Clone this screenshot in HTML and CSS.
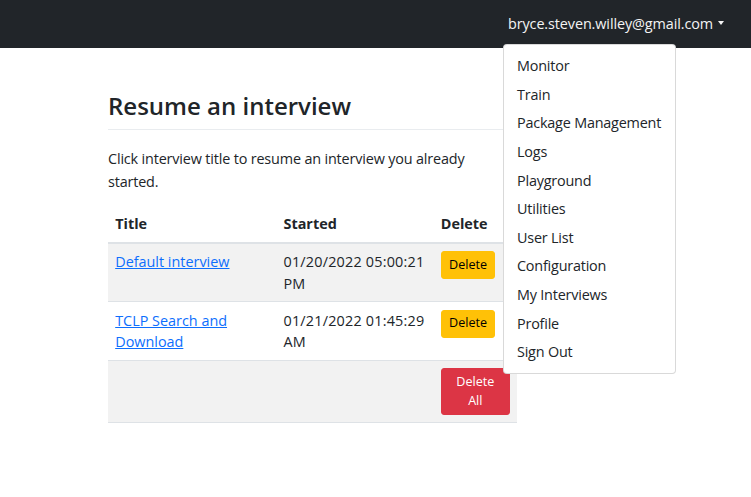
FILE: index.html
```html
<!DOCTYPE html>
<html>
<head>
<meta charset="utf-8">
<link rel="stylesheet" href="styles.css">
</head>
<body>
<nav class="navbar">
  <div class="user-menu">
    <a class="user-toggle" href="#">bryce.steven.willey@gmail.com<span class="caret"></span></a>
    <div class="dropdown-menu">
      <a class="dropdown-item" href="#">Monitor</a>
      <a class="dropdown-item" href="#">Train</a>
      <a class="dropdown-item" href="#">Package Management</a>
      <a class="dropdown-item" href="#">Logs</a>
      <a class="dropdown-item" href="#">Playground</a>
      <a class="dropdown-item" href="#">Utilities</a>
      <a class="dropdown-item" href="#">User List</a>
      <a class="dropdown-item" href="#">Configuration</a>
      <a class="dropdown-item" href="#">My Interviews</a>
      <a class="dropdown-item" href="#">Profile</a>
      <a class="dropdown-item" href="#">Sign Out</a>
    </div>
  </div>
</nav>
<main class="content">
  <h1 class="page-title">Resume an interview</h1>
  <p class="intro">Click interview title to resume an interview you already started.</p>
  <table class="sessions">
    <thead>
      <tr><th class="c-title">Title</th><th class="c-start">Started</th><th class="c-del">Delete</th></tr>
    </thead>
    <tbody>
      <tr class="striped">
        <td><a class="link" href="#">Default interview</a></td>
        <td><span class="ts">01/20/2022 05:00:21 PM</span></td>
        <td><button class="btn btn-warning">Delete</button></td>
      </tr>
      <tr>
        <td><a class="link" href="#">TCLP Search and Download</a></td>
        <td><span class="ts">01/21/2022 01:45:29 AM</span></td>
        <td><button class="btn btn-warning">Delete</button></td>
      </tr>
      <tr class="striped">
        <td></td>
        <td></td>
        <td><button class="btn btn-danger">Delete All</button></td>
      </tr>
    </tbody>
  </table>
</main>
</body>
</html>
```
FILE: styles.css
```css
html, body {
  margin: 0;
  padding: 0;
  background: #fff;
}
body {
  font-family: "Open Sans", "Noto Sans", sans-serif;
  font-size: 14.4px;
  line-height: 1.5;
  color: #212529;
}
.navbar {
  height: 48px;
  background: #212529;
  display: flex;
  justify-content: flex-end;
  align-items: center;
  padding-right: 27px;
}
.user-menu {
  position: relative;
}
.user-toggle {
  color: #f4f4f4;
  text-decoration: none;
  display: flex;
  align-items: center;
  letter-spacing: -0.1px;
}
.caret {
  display: inline-block;
  margin-left: 5px;
  border-top: 4.5px solid #f4f4f4;
  border-left: 3.5px solid transparent;
  border-right: 3.5px solid transparent;
  margin-top: -2px;
}
.dropdown-menu {
  position: absolute;
  top: 31px;
  left: -5px;
  width: 171px;
  background: #fff;
  border: 1px solid rgba(0,0,0,.15);
  border-radius: 4px;
  padding: 6.5px 0;
  display: flex;
  flex-direction: column;
  z-index: 10;
}
.dropdown-item {
  display: block;
  padding: 3.5px 13px;
  line-height: 21.6px;
  color: #212529;
  text-decoration: none;
  white-space: nowrap;
  letter-spacing: -0.2px;
}
.content {
  width: 409px;
  padding: 40px 0 0 108px;
}
.page-title {
  font-size: 24px;
  font-weight: 600;
  line-height: 1.2;
  margin: 0;
  padding: 4px 0 8px;
  border-bottom: 1px solid #e9ecef;
  width: 420px;
}
.intro {
  margin: 17px 0 13px;
  line-height: 23px;
  letter-spacing: -0.16px;
}
.sessions {
  width: 409px;
  border-collapse: collapse;
}
.sessions th {
  text-align: left;
  font-weight: 700;
  padding: 7.2px;
  border-bottom: 2px solid #dee2e6;
  vertical-align: bottom;
}
.c-title { width: 154px; }
.c-start { width: 143px; }
.sessions td {
  padding: 7.2px;
  vertical-align: top;
  border-bottom: 1px solid #dee2e6;
}
.striped td {
  background: #f2f2f2;
}
.ts {
  letter-spacing: 0.2px;
}
.link {
  color: #0d6efd;
  text-decoration: underline;
}
.btn {
  font-family: inherit;
  font-size: 12.6px;
  line-height: 1.5;
  padding: 3.6px 7.2px;
  border-radius: 3px;
  border: 1px solid transparent;
  cursor: pointer;
}
.btn-warning {
  background: #ffc107;
  border-color: #ffc107;
  color: #000;
}
.btn-danger {
  background: #dc3545;
  border-color: #dc3545;
  color: #fff;
  width: 69px;
  padding: 3.6px 10px;
}
```
